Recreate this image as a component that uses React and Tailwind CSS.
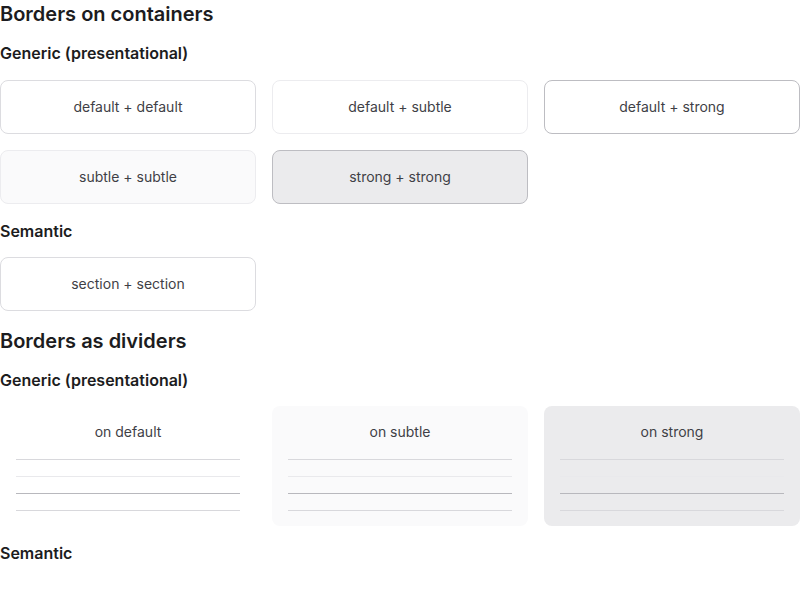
const containers = [
  { label: "default + default", cls: "bg-white border-[#dcdce0]" },
  { label: "default + subtle", cls: "bg-white border-[#ececef]" },
  { label: "default + strong", cls: "bg-white border-[#bdbdc2]" },
  { label: "subtle + subtle", cls: "bg-[#fafafb] border-[#ececef]" },
  { label: "strong + strong", cls: "bg-[#ebebed] border-[#bdbdc2]" },
];

const dividerSurfaces = [
  { label: "on default", cls: "bg-white" },
  { label: "on subtle", cls: "bg-[#fafafb]" },
  { label: "on strong", cls: "bg-[#ebebed]" },
];

function Box({ label, cls }) {
  return (
    <div className={`rounded-lg border py-4 text-center text-sm leading-5 text-[#3f3f46] ${cls}`}>
      {label}
    </div>
  );
}

function DividerCard({ label, cls }) {
  return (
    <div className={`rounded-lg px-4 pt-4 pb-[15px] text-center text-sm leading-5 text-[#3f3f46] ${cls}`}>
      <div>{label}</div>
      <div className="h-[18px] border-b border-[#d8d8dc]" />
      <div className="h-[17px] border-b border-[#e9e9ec]" />
      <div className="h-[17px] border-b border-[#b8b8bd]" />
      <div className="h-[17px] border-b border-[#d8d8dc]" />
    </div>
  );
}

export default function App() {
  return (
    <div className="w-[800px] bg-white font-['Inter',sans-serif] text-[#1c1c20]">
      <h2 className="text-xl font-semibold leading-7">Borders on containers</h2>
      <h3 className="mt-[13px] mb-[15px] text-base font-semibold leading-6">Generic (presentational)</h3>
      <div className="grid grid-cols-3 gap-4">
        {containers.map((c) => (
          <Box key={c.label} {...c} />
        ))}
      </div>
      <h3 className="mt-[15px] mb-[14px] text-base font-semibold leading-6">Semantic</h3>
      <div className="grid grid-cols-3 gap-4">
        <Box label="section + section" cls="bg-white border-[#dcdce0]" />
      </div>

      <h2 className="mt-4 text-xl font-semibold leading-7">Borders as dividers</h2>
      <h3 className="mt-[13px] mb-[14px] text-base font-semibold leading-6">Generic (presentational)</h3>
      <div className="grid grid-cols-3 gap-4">
        {dividerSurfaces.map((d) => (
          <DividerCard key={d.label} {...d} />
        ))}
      </div>
      <h3 className="mt-[15px] mb-[14px] text-base font-semibold leading-6">Semantic</h3>
    </div>
  );
}
